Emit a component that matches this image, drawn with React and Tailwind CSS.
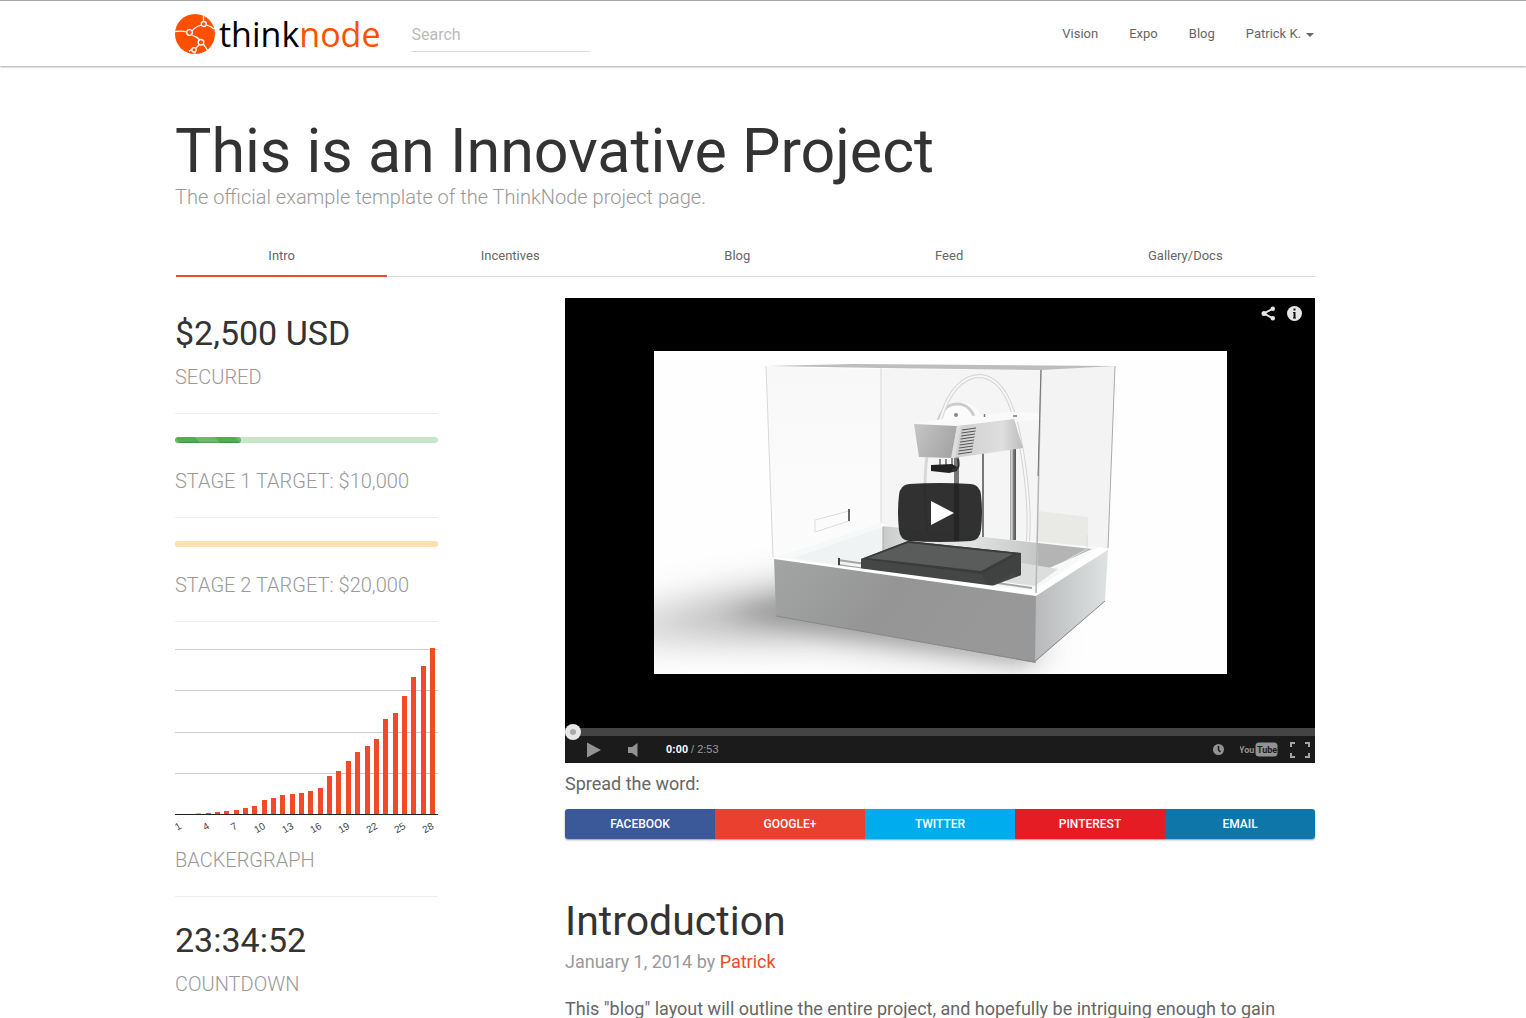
import React from "react";

const navLinks = ["Vision", "Expo", "Blog"];
const tabs = ["Intro", "Incentives", "Blog", "Feed", "Gallery/Docs"];
const shares = [
  { label: "FACEBOOK", color: "bg-[#3b5998]" },
  { label: "GOOGLE+", color: "bg-[#ea4030]" },
  { label: "TWITTER", color: "bg-[#00aced]" },
  { label: "PINTEREST", color: "bg-[#e51c23]" },
  { label: "EMAIL", color: "bg-[#0e76a8]" },
];
const backers = [
  0, 1, 1.5, 2, 3, 4, 5, 7, 9, 15, 17, 20, 21, 22, 24, 27, 39, 44, 54, 63, 69,
  76, 96, 102, 119, 138, 149, 167,
];

function LogoMark() {
  return (
    <svg viewBox="0 0 40 40" className="size-10" aria-hidden="true">
      <defs>
        <clipPath id="logo-disc">
          <circle cx="20" cy="20" r="20" />
        </clipPath>
      </defs>
      <circle cx="20" cy="20" r="20" fill="#ff4f00" />
      <g fill="none" stroke="#fff" strokeWidth="1.3" clipPath="url(#logo-disc)">
        <path d="M0 17.500C5 17 9 17 12 18M17 17C20 13 23 12 26.500 11M28.500 7.500V1M31.500 11C35 12 37 13 39 15M16.500 21C20 22 23 24 25 26M24 31L21 34M28 30C30 32 31 34 32.500 36M17 35L14 37.500M20 38V40" />
        <circle cx="14.500" cy="18.500" r="2.800" />
        <circle cx="28.800" cy="10" r="2.500" />
        <circle cx="26" cy="28.300" r="2.800" />
        <circle cx="19" cy="35.800" r="2.200" />
      </g>
    </svg>
  );
}

function Header() {
  return (
    <header className="border-t border-[#aaaaaa] bg-white pr-9 shadow-[0_1px_2px_rgba(0,0,0,0.35)]">
      <div className="mx-auto flex h-[65px] max-w-[1140px] items-center">
        <a href="#" className="flex items-center gap-1">
          <LogoMark />
          <span className="font-['Open_Sans',sans-serif] text-[34px] leading-10 text-black">
            think<span className="text-[#ff4f00]">node</span>
          </span>
        </a>
        <input
          type="text"
          aria-label="Search"
          placeholder="Search"
          className="ml-[31px] h-9 w-[179px] border-b border-[#dddddd] bg-transparent pt-0.5 text-[16px] text-[#666] outline-none placeholder:text-[#bbbbbb]"
        />
        <nav className="ml-auto flex items-center gap-[31px] pr-px text-[13px] text-[#666666]">
          {navLinks.map((l) => (
            <a key={l} href="#">
              {l}
            </a>
          ))}
          <button type="button" className="flex items-center gap-[5px]">
            Patrick K.
            <svg viewBox="0 0 8 4" className="mt-0.5 h-1 w-2" aria-hidden="true">
              <path d="M0 0H8L4 4Z" fill="#666" />
            </svg>
          </button>
        </nav>
      </div>
    </header>
  );
}

function Tabs() {
  return (
    <nav className="mt-[27px] flex text-[13px] leading-5 text-[#666666]">
      {tabs.map((t, i) => (
        <a
          key={t}
          href="#"
          className={
            i === 0
              ? "mx-px flex-auto border-b-2 border-[#f04b28] px-[15px] pt-2.5 pb-[9px] text-center"
              : "flex-auto border-b border-[#dddddd] px-[15px] py-2.5 text-center"
          }
        >
          {t}
        </a>
      ))}
    </nav>
  );
}

function Backergraph() {
  return (
    <svg
      viewBox="0 0 263 190"
      className="mt-[26px] w-[263px] max-w-none overflow-visible"
      role="img"
      aria-label="Backergraph"
    >
      <path d="M0 1.500H263M0 42.500H263M0 84.500H263M0 125.500H263" stroke="#cccccc" />
      <g fill="#f04b28">
        {backers.map((h, i) => (
          <rect key={i} x={Math.round(2.5 + i * 9.35)} y={167 - h} width="5" height={h} />
        ))}
      </g>
      <path d="M0 166.500H263" stroke="#222" />
      <g fill="#444" fontSize="10" fontFamily="Liberation Sans, sans-serif" textAnchor="end">
        {backers.map((h, i) =>
          i % 3 === 0 ? (
            <text key={i} transform={`translate(${7 + i * 9.35} 180) rotate(-30)`}>
              {i + 1}
            </text>
          ) : null
        )}
      </g>
    </svg>
  );
}

const label = "text-[20px] leading-6 font-light text-[#999999]";

function Stage({ title, track, children }) {
  return (
    <section className="mt-[23px] border-b border-[#eeeeee] pb-6">
      <div className={`h-1.5 overflow-hidden rounded-sm ${track}`}>{children}</div>
      <p className={`mt-[26px] ${label}`}>{title}</p>
    </section>
  );
}

function Sidebar() {
  return (
    <aside className="col-span-3">
      <section className="border-b border-[#eeeeee] pt-[15px] pb-6">
        <h2 className="text-[34px] leading-10 text-[#333]">$2,500 USD</h2>
        <p className={`mt-3 ${label}`}>SECURED</p>
      </section>
      <Stage title="STAGE 1 TARGET: $10,000" track="bg-[#c8e6c9]">
        <div className="h-full w-1/4 rounded-sm bg-[#4caf50] bg-[linear-gradient(45deg,rgba(255,255,255,.15)_25%,transparent_25%,transparent_50%,rgba(255,255,255,.15)_50%,rgba(255,255,255,.15)_75%,transparent_75%)] bg-[length:40px_40px] bg-[position:20px_0] shadow-[inset_0_-1px_0_rgba(0,0,0,0.15)]" />
      </Stage>
      <Stage title="STAGE 2 TARGET: $20,000" track="bg-[#ffe0b2]" />
      <section className="border-b border-[#eeeeee] pb-6">
        <Backergraph />
        <p className={`mt-2.5 ${label}`}>BACKERGRAPH</p>
      </section>
      <section className="pt-[23px]">
        <h2 className="text-[34px] leading-10 text-[#333]">23:34:52</h2>
        <p className={`mt-3 ${label}`}>COUNTDOWN</p>
      </section>
    </aside>
  );
}

function PrinterStill() {
  return (
    <svg viewBox="0 0 573 323" className="h-full w-full" role="img" aria-label="3D printer">
      <defs>
        <filter id="soft" x="-50%" y="-50%" width="200%" height="200%">
          <feGaussianBlur stdDeviation="18" />
        </filter>
        <filter id="soft-small" x="-50%" y="-50%" width="200%" height="200%">
          <feGaussianBlur stdDeviation="9" />
        </filter>
        <linearGradient id="cast" x1="0" x2="1">
          <stop offset="0" stopColor="#ccc" />
          <stop offset="0.4" stopColor="#888" />
          <stop offset="1" stopColor="#aaa" />
        </linearGradient>
        <linearGradient id="front" x1="0" x2="1" y1="0" y2="0.3">
          <stop offset="0" stopColor="#a3a5a5" />
          <stop offset="0.5" stopColor="#959595" />
          <stop offset="1" stopColor="#989898" />
        </linearGradient>
        <linearGradient id="side" x1="0" x2="1">
          <stop offset="0" stopColor="#b7b9ba" />
          <stop offset="1" stopColor="#dfe2e3" />
        </linearGradient>
        <linearGradient id="back" x1="0" x2="1">
          <stop offset="0" stopColor="#c9caca" />
          <stop offset="0.3" stopColor="#e8e9e9" />
          <stop offset="0.6" stopColor="#dfe0e0" />
          <stop offset="1" stopColor="#c4c5c5" />
        </linearGradient>
        <linearGradient id="glass" x1="0" x2="0" y1="0" y2="1">
          <stop offset="0" stopColor="#f8f8f8" />
          <stop offset="1" stopColor="#fcfcfc" />
        </linearGradient>
        <linearGradient id="head" x1="0" x2="1" y1="0" y2="0.4">
          <stop offset="0" stopColor="#c6c6c6" />
          <stop offset="1" stopColor="#a6a6a6" />
        </linearGradient>
        <linearGradient id="arm" x1="0" x2="1">
          <stop offset="0" stopColor="#cecece" />
          <stop offset="0.7" stopColor="#dedede" />
          <stop offset="1" stopColor="#bcbcbc" />
        </linearGradient>
        <linearGradient id="steel" x1="0" x2="1">
          <stop offset="0" stopColor="#999" />
          <stop offset="0.3" stopColor="#ddd" />
          <stop offset="0.6" stopColor="#777" />
          <stop offset="1" stopColor="#555" />
        </linearGradient>
      </defs>
      <rect width="573" height="323" fill="#fefefe" />
      <path d="M-50 270L60 246L150 232L400 290L375 312L160 286L-50 290Z" fill="url(#cast)" opacity="0.75" filter="url(#soft)" />
      <path d="M70 262L140 245L385 300L370 312L150 278Z" fill="#888" opacity="0.5" filter="url(#soft-small)" />
      {/* glass walls */}
      <path d="M112 16L227 18V172L119 206Z" fill="url(#glass)" />
      <path d="M227 18L387 19L382 236L227 172Z" fill="#f5f5f5" />
      <path d="M387 18L461 15L454 197L382 236Z" fill="#f3f3f3" />
      <path d="M385 160L434 166L434 195L382 197Z" fill="#e9e9e6" />
      {/* inner tray */}
      <path d="M119 207L227 172L229 176L454 197L382 244Z" fill="#f7f8f8" />
      <path d="M140 207L229 176V206L205 213L180 215Z" fill="#f0f3f4" />
      <path d="M229 175L384 192V222L229 202Z" fill="url(#back)" />
      <path d="M384 192L438 198L384 222Z" fill="#b3b4b3" />
      <path d="M368 212L404 218L381 235L352 231Z" fill="#dcdddd" />
      <path d="M229 176V200" stroke="#aaa" />
      <path d="M184 209L378 237M184 214L374 241" stroke="#a5a5a5" strokeWidth="2" />
      <path d="M185 207V214" stroke="#444" strokeWidth="2" />
      {/* supports */}
      <rect x="300" y="100" width="5" height="90" fill="#777" />
      <rect x="328" y="100" width="2" height="86" fill="#777" />
      <rect x="356" y="98" width="6" height="91" fill="url(#steel)" />
      <path d="M273 106Q269 130 273 181" fill="none" stroke="#d8d8d8" strokeWidth="3" />
      {/* spool and feed tube */}
      <path d="M282 74C285 61 291 53 303 51C317 50 325 57 327 68V74Z" fill="#fbfbfb" />
      <path d="M283 74C286 61 293 53 303 53C313 53 319 60 321 69" fill="none" stroke="#cccccc" strokeWidth="3" />
      <path d="M286 70C295 37 311 25 326 25C346 26 356 48 362 71C369 100 377 150 374 190" fill="none" stroke="#d4d4d4" strokeWidth="4" />
      <path d="M286 70C295 37 311 25 326 25C346 26 356 48 362 71C369 100 377 150 374 190" fill="none" stroke="#f7f7f7" strokeWidth="2" />
      <circle cx="302" cy="64" r="2" fill="#888" />
      {/* arm */}
      <path d="M260 73L288 68L357 61L384 62L390 68L303 76Z" fill="#fafafa" />
      <path d="M330.500 63V66M359 65H363" stroke="#777" strokeWidth="1.500" />
      <path d="M303 75L360 68L369 97L300 107Z" fill="url(#arm)" />
      <path d="M260 73L303 75L298 107L265 106Z" fill="url(#head)" />
      <path d="M303 75L307 74.500L301 107H297Z" fill="#dedede" />
      <path d="M308 79L322 77M307.500 82L321.500 80M307 85L321 83M306.500 88L320.500 86M306 91L320 89M305.500 94L319.500 92M305 97L319 95M304.500 100L318.500 98M304 103L318 101" stroke="#555" />
      <path d="M286 108V114M292 108V114M298 107V114" stroke="#888" strokeWidth="2" />
      <path d="M277 114L298 113L303 116V120L295 122L277 120Z" fill="#222" />
      <path d="M298 119C306 119 305 113 304 108" fill="none" stroke="#333" strokeWidth="2" />
      {/* build plate */}
      <path d="M207 208L254 190L367 202V224L333 237L207 218Z" fill="#454747" />
      <path d="M207 208L254 190L367 202L328 223Z" fill="#3a3c3c" />
      <path d="M214 207L254 192L359 203L327 220Z" fill="#5a5c5c" />
      <path d="M328 223L367 203V224L361 226V221L333 236Z" fill="#404242" />
      {/* housing */}
      <path d="M120 207L382 244V312L122 265Z" fill="url(#front)" />
      <path d="M382 244L454 199L451 250L381 311Z" fill="url(#side)" />
      <path d="M120 206L380 240L445 196L454 198L382 245L120 208Z" fill="#fff" />
      <path d="M122 265L380 311L451 250" fill="none" stroke="#888" />
      {/* cover edges */}
      <path d="M112 15L200 13L461 15L387 19L227 17L112 15Z" fill="#bdbdbd" />
      <path d="M112 15L119 206M227 17V172" fill="none" stroke="#d8d8d8" />
      <path d="M387 19L382 242" stroke="#b5b5b5" strokeWidth="1.500" />
      <path d="M387 19L384 125" stroke="#777" />
      <path d="M461 15L454 197" stroke="#aaa" />
      <path d="M161 181V169L195 160M161 181L195 170" fill="none" stroke="#dddddd" />
      <path d="M195 158V170" stroke="#333" strokeWidth="1.500" />
      <path d="M411 210L433 198V184" fill="none" stroke="#ddd" />
    </svg>
  );
}

function Video() {
  return (
    <div className="relative bg-black">
      <div className="flex h-[430px] items-center justify-center">
        <div className="mb-px h-[323px] w-[573px]">
          <PrinterStill />
        </div>
      </div>
      <button
        type="button"
        aria-label="Play video"
        className="absolute top-[185px] left-1/2 h-[59px] w-[84px] -translate-x-1/2"
      >
        <svg viewBox="0 0 84 59" className="h-full w-full">
          <path d="M11 1Q42-1 73 1Q82 2 83 12Q85 30 83 47Q82 57 73 58Q42 60 11 58Q2 57 1 47Q-1 30 1 12Q2 2 11 1Z" fill="#1c1c1c" fillOpacity="0.9" />
          <path d="M33 18V42L56 30Z" fill="#fff" />
        </svg>
      </button>
      <div className="absolute top-2 right-[13px] flex gap-[11px]">
        <button type="button" aria-label="Share">
          <svg viewBox="0 0 15 15" className="size-[15px]">
            <path d="M12 2.500L3 7.500L12 12.500" fill="none" stroke="#e6e6e6" strokeWidth="2" />
            <circle cx="11.800" cy="2.700" r="2.200" fill="#e6e6e6" />
            <circle cx="3" cy="7.500" r="2.500" fill="#e6e6e6" />
            <circle cx="11.800" cy="12.300" r="2.200" fill="#e6e6e6" />
          </svg>
        </button>
        <button type="button" aria-label="Information">
          <svg viewBox="0 0 15 15" className="size-[15px]">
            <circle cx="7.500" cy="7.500" r="7.500" fill="#e6e6e6" />
            <path d="M6.500 2.500H8.500V4.500H6.500ZM6 6H8.500V11.500H9V12.500H6V11.500H6.500V7H6Z" fill="#111" />
          </svg>
        </button>
      </div>
      <div className="relative h-2 bg-[#444444]">
        <span className="absolute -top-1 left-0 flex size-4 items-center justify-center rounded-full bg-[#e8e8e8]">
          <span className="size-1.5 rounded-full bg-[#aaaaaa]" />
        </span>
      </div>
      <div className="flex h-[27px] items-center bg-[#1b1b1b] pr-[5px] pl-[22px] font-['Liberation_Sans',sans-serif] text-[11px] text-[#999999]">
        <button type="button" aria-label="Play">
          <svg viewBox="0 0 14 16" className="h-4 w-3.5">
            <path d="M0 0.500V15.500L14 8Z" fill="#929292" />
          </svg>
        </button>
        <button type="button" aria-label="Mute" className="ml-[27px]">
          <svg viewBox="0 0 10 14" className="h-3.5 w-2.5">
            <path d="M0 4H4L9.500 0V14L4 10H0Z" fill="#929292" />
          </svg>
        </button>
        <span className="ml-7 whitespace-pre">
          <b className="text-white">0:00</b> / 2:53
        </span>
        <button type="button" aria-label="Watch later" className="ml-auto">
          <svg viewBox="0 0 11 11" className="size-[11px]">
            <circle cx="5.500" cy="5.500" r="5.500" fill="#929292" />
            <path d="M5.500 2V6L7.500 8" fill="none" stroke="#1b1b1b" strokeWidth="1.500" />
          </svg>
        </button>
        <a href="#" aria-label="YouTube" className="ml-4">
          <svg viewBox="0 0 38 15" className="h-[15px] w-[38px]">
            <rect x="15.500" y="0.500" width="22" height="14" rx="3.500" fill="#929292" />
            <g fontFamily="Roboto, sans-serif" fontWeight="700" fontSize="9">
              <text x="-1" y="11" fill="#929292">You</text>
              <text x="17" y="11" fill="#1b1b1b">Tube</text>
            </g>
          </svg>
        </a>
        <button type="button" aria-label="Full screen" className="ml-3">
          <svg viewBox="0 0 20 16" className="h-4 w-5">
            <path d="M1 5V1H5M15 1H19V5M19 11V15H15M5 15H1V11" fill="none" stroke="#a5a5a5" strokeWidth="2" />
          </svg>
        </button>
      </div>
    </div>
  );
}

function Article() {
  return (
    <main className="col-span-8 col-start-5">
      <Video />
      <p className="mt-[9px] text-[18px] leading-6 text-[#666666]">Spread the word:</p>
      <div className="mt-[13px] grid grid-cols-5 overflow-hidden rounded-[3px] shadow-[0_1px_2px_rgba(0,0,0,0.4)]">
        {shares.map((s) => (
          <button key={s.label} type="button" className={`h-[30px] text-[12px] font-medium text-white ${s.color}`}>
            {s.label}
          </button>
        ))}
      </div>
      <h2 className="mt-[58px] text-[41px] leading-12 text-[#333]">Introduction</h2>
      <p className="mt-[5px] text-[18px] leading-6 text-[#999999]">
        January 1, 2014 by{" "}
        <a href="#" className="text-[#f04b28]">
          Patrick
        </a>
      </p>
      <p className="mt-[23px] text-[18px] leading-6 text-[#666666]">
        This "blog" layout will outline the entire project, and hopefully be intriguing enough to gain
      </p>
    </main>
  );
}

export default function App() {
  return (
    <div className="min-h-screen bg-white font-[Roboto,sans-serif]">
      <Header />
      <div className="pr-9">
        <div className="mx-auto max-w-[1140px]">
          <h1 className="mt-[51px] text-[61px] leading-[68px] text-[#333]">This is an Innovative Project</h1>
          <p className="text-[20px] leading-6 font-light text-[#999999]">
            The official example template of the ThinkNode project page.
          </p>
          <Tabs />
          <div className="mt-[21px] grid grid-cols-12 gap-x-[30px]">
            <Sidebar />
            <Article />
          </div>
        </div>
      </div>
    </div>
  );
}
